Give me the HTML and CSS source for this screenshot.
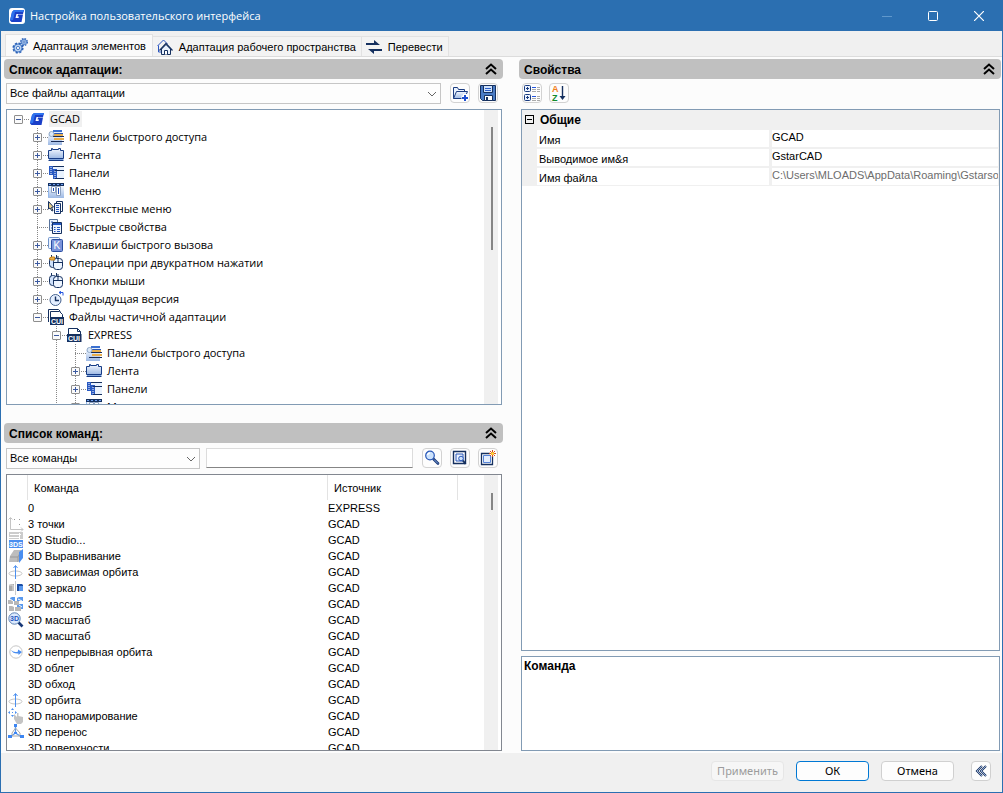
FILE: index.html
```html
<!DOCTYPE html>
<html lang="ru">
<head>
<meta charset="utf-8">
<title>Настройка пользовательского интерфейса</title>
<link rel="stylesheet" href="styles.css">
</head>
<body>
<svg class="defs" width="0" height="0" aria-hidden="true">
  <linearGradient id="blue" x1="0" y1="0" x2="0" y2="1"><stop offset="0" stop-color="#f4f8ff"/><stop offset="1" stop-color="#9db9e4"/></linearGradient>
  <symbol id="g" viewBox="0 0 16 16"><path d="M5 2h10l-1 4H7.500L6.500 10h3l.5-1.500H8.500L9 6.500h5L12.500 14H2.500L1 12.500 3 4z" fill="#1a3fc8"/><path d="M5 2h10l-.5 2H6L4 12l-3 .5L3 4z" fill="#2f73ee"/></symbol>
  <symbol id="up" viewBox="0 0 12 12"><path d="M1 6l5-4.500L11 6M1 11l5-4.500L11 11" fill="none" stroke="#000" stroke-width="2"/></symbol>
  <symbol id="down" viewBox="0 0 10 6"><path d="M1 1l4 4 4-4" fill="none" stroke="#666"/></symbol>
  <symbol id="gears" viewBox="0 0 16 16"><g fill="#b9d3f3" stroke="#2c62b8"><circle cx="6" cy="10" r="4.800" stroke-width="1.600" stroke-dasharray="2.200 1.570"/><circle cx="6" cy="10" r="4" stroke-width=".8"/><circle cx="6" cy="10" r="1.600" fill="#fff" stroke-width=".8"/><circle cx="12" cy="4" r="3.300" stroke-width="1.400" stroke-dasharray="1.600 1"/><circle cx="12" cy="4" r="2.600" stroke-width=".6"/><circle cx="12" cy="4" r="1.100" fill="#fff" stroke-width=".8"/></g></symbol>
  <symbol id="home" viewBox="0 0 16 16"><path d="M.5 7L6.500 1l4 4M1.500 6.500V13H4" fill="none" stroke="#2b55c0"/><path d="M4.500 10v5.500h9V10L9 5.500z" fill="#e8f1fd" stroke="#15305f"/><path d="M2.500 11.500L9 4.500l6.500 7" fill="none" stroke="#15305f" stroke-width="1.200"/><path d="M7.500 15.500v-4h3v4" fill="#fff" stroke="#15305f"/></symbol>
  <symbol id="swap" viewBox="0 0 16 16"><path d="M0 4h8V1l6 5H0zM16 10H2l6 5v-3h8z" fill="#15305f"/></symbol>
  <symbol id="open" viewBox="0 0 16 16"><path d="M1.500 13.500v-11h4l1 2h6v2" fill="#eaf2fe" stroke="#1b3c80"/><path d="M1.500 13.500l3-7h11l-3 7z" fill="url(#blue)" stroke="#1b3c80"/><path d="M13 9v7M9.500 12.500h7" stroke="#fff" stroke-width="4"/><path d="M13 10v6M10 13h6" stroke="#1d4fd0" stroke-width="2"/></symbol>
  <symbol id="save" viewBox="0 0 16 16"><path d="M.5.5h15v15h-13l-2-2z" fill="#4a7cc6" stroke="#15305f"/><path d="M3.500.5h9v7h-9z" fill="#cfe2fb" stroke="#15305f"/><path d="M5 3.500h6M5 5.500h6" stroke="#2c5fca"/><path d="M4.500 10.500h8v5h-8z" fill="#fff" stroke="#15305f"/><path d="M6 12h2v3H6z" fill="#15305f"/></symbol>
  <symbol id="quick" viewBox="0 0 16 16"><path d="M0 5h14v11H0z" fill="url(#blue)"/><path d="M5 1h9v5H5z" fill="#e8f0fc"/><path d="M5 1h9v2H5z" fill="#3b70d0"/><path d="M6 5h9v2H6zM6 9h10v2H6z" fill="#e7ae4c"/><path d="M5 7.500h11M3 12.500h13" stroke="#172a56"/><path d="M5 4.500h10" stroke="#2857b8"/><circle cx="3.500" cy="5" r="2.500" fill="#dbe8f7" stroke="#90a9c8"/></symbol>
  <symbol id="ribbon" viewBox="0 0 16 16"><path d="M.5 11.500v-8h3v-2h1v1h6v-1h2v2h3v8z" fill="url(#blue)" stroke="#173c86"/><path d="M1 12.500h14.500" stroke="#7ea3dc"/><path d="M.5 13.500h15" stroke="#173c86"/></symbol>
  <symbol id="panels" viewBox="0 0 16 16"><path d="M1 1h4v9H1z" fill="#2859c2"/><path d="M3 2v8" stroke="#fff" stroke-dasharray="1 1"/><path d="M5 1.500h11" stroke="#15305f"/><path d="M5 2h11v3H5z" fill="#e9f2fe"/><path d="M7 6h9v7H7z" fill="#e9f2fe"/><path d="M5 4h4v10H5z" fill="#2859c2"/><path d="M7 6v7" stroke="#fff" stroke-dasharray="1 1"/><path d="M7 5.500h9M7 13.500h9" stroke="#15305f"/></symbol>
  <symbol id="menu" viewBox="0 0 16 16"><path d="M0 3h16v12H0z" fill="url(#blue)"/><path d="M0 0h16v3H0z" fill="#15305f"/><path d="M1 1.500h14" stroke="#6fa0f0" stroke-dasharray="2 2"/><path d="M3.500 3.500h4v6h-4zM8.500 3.500h4v9h-4z" fill="#fff" stroke="#8ba0c0"/><path d="M5 5h1v3H5zM10 5h1v6h-1z" fill="#1b48b2"/><path d="M.5 3v11" stroke="#92b8ec"/></symbol>
  <symbol id="context" viewBox="0 0 16 16"><path d="M8.500 2.500v-2h6v10h-2" fill="#fff" stroke="#15305f"/><path d="M6.500 2.500h6v10h-6z" fill="#edf4ff" stroke="#15305f"/><path d="M8 4.500h3M8 6.500h3M8 8.500h3M8 10.500h3" stroke="#2456bf"/><path d="M.5.500l5 5.500-2 .5 1.500 3-1 .5-2-3-1.500 1z" fill="#e9d08e" stroke="#15305f"/></symbol>
  <symbol id="props" viewBox="0 0 16 16"><path d="M1.500.5h8v11h-8z" fill="#edf4ff" stroke="#57739c"/><path d="M3 3h2M3 6h2M3 9h2" stroke="#2456bf"/><path d="M4.500 3.500h9v11h-9z" fill="#edf4ff" stroke="#15305f"/><path d="M5 4h8v2H5z" fill="#2456bf"/><path d="M6 8.500h1.500M9 8.500h3M6 10.500h1.500M9 10.500h3M6 12.500h1.500M9 12.500h3" stroke="#2456bf"/></symbol>
  <symbol id="keys" viewBox="0 0 16 16"><rect x=".5" y=".5" width="11" height="11" rx="1" fill="#eaf2ff" stroke="#6d92ca"/><rect x="3.500" y="2.500" width="11" height="12" rx="1" fill="#7a93da" stroke="#294da0"/><text x="5.500" y="12" class="glyph k">K</text></symbol>
  <symbol id="mouse" viewBox="0 0 16 16"><path d="M3.500 0v3M8.500 0v3" stroke="#15305f"/><rect x="1.500" y="2.500" width="7" height="10" rx="3" fill="#cfe1fb" stroke="#15305f"/><path d="M5.500 6.500q0-3 3-3h3q3 0 3 3v5q0 3-3 3h-3q-3 0-3-3z" fill="#eef5ff" stroke="#15305f"/><path d="M6 7.500h8.500M10 1v6.500" stroke="#15305f"/></symbol>
  <symbol id="dbl" viewBox="0 0 16 16"><use href="#mouse" width="16" height="16"/><path d="M1.500 3l2-1h3v3h-4z" fill="#e7ae4c" stroke="#c88218"/></symbol>
  <symbol id="clock" viewBox="0 0 16 16"><circle cx="7.500" cy="9" r="5.500" fill="#e4efff" stroke="#45618e"/><path d="M7.500 5.500V9.500H11" fill="none" stroke="#15305f" stroke-width="1.400"/><path d="M11 1.500h4v3M13 0l-2 1.500 2 1.500" fill="none" stroke="#2456e0"/></symbol>
  <symbol id="cui" viewBox="0 0 16 16"><path d="M1.500 8V1.500h9l3 3V8" fill="#fff" stroke="#15305f"/><path d="M10.500 1.500v3h3" fill="none" stroke="#15305f"/><path d="M0 7h14.500v8H0z" fill="#15305f"/><text x="1" y="14" class="glyph">CUI</text></symbol>
  <symbol id="cuis" viewBox="0 0 16 16"><path d="M.5 13V.5h10l2 2" fill="#fff" stroke="#15305f"/><path d="M2.500 8V2.500h9l3 3V8" fill="#fff" stroke="#15305f"/><path d="M2 8h14v8H2z" fill="#15305f"/><text x="3" y="15" class="glyph">CUI</text></symbol>
  <symbol id="find" viewBox="0 0 16 16"><path d="M9.500 9l4.500 4.500" stroke="#183878" stroke-width="2.600" stroke-linecap="round"/><path d="M10 9.500l4 4" stroke="#89aae0"/><circle cx="6" cy="5.500" r="4.300" fill="#cce2fc" stroke="#2857b8" stroke-width="1.200"/><path d="M3.500 5q.5-2 2.500-2" fill="none" stroke="#fff" stroke-width="1.500"/></symbol>
  <symbol id="preview" viewBox="0 0 16 16"><path d="M1.500 1.500h12v12h-12z" fill="#fff" stroke="#15305f" stroke-width="1.400"/><path d="M4 4h7v7H4z" fill="#eef5ff" stroke="#2857b8"/><circle cx="9" cy="8.500" r="2.300" fill="#cfe3fd" stroke="#2857b8"/><path d="M11 10.500l2.500 3.500" stroke="#15305f" stroke-width="2"/></symbol>
  <symbol id="new" viewBox="0 0 16 16"><path d="M12.500 6v8.500h-11v-11H10" fill="#fff" stroke="#15305f" stroke-width="1.300"/><path d="M3.500 5.500h7v7h-7z" fill="#e4eefd" stroke="#5784d8"/><path d="M12.500 0v7M9 3.500h7M10 1l5 5M15 1l-5 5" stroke="#d8501c"/><circle cx="12.500" cy="3.500" r="1.600" fill="#ffd83a"/></symbol>
  <symbol id="cat" viewBox="0 0 16 16"><g fill="#edf4ff" stroke="#1b3c80"><rect x=".5" y=".5" width="6" height="6" rx="1"/><rect x=".5" y="9.500" width="6" height="6" rx="1"/></g><path d="M2 3.500h3M3.500 2v3M2 12.500h3M3.500 11v3" stroke="#1b3c80"/><path d="M8 2.500h4M8 11.500h4" stroke="#2456e0"/><path d="M8 4.500h8M8 6.500h8M8 13.500h8M8 15.500h8M13 2.500h3M13 11.500h3" stroke="#aaa" stroke-dasharray="4 1"/></symbol>
  <symbol id="az" viewBox="0 0 16 16"><text x="1" y="7" class="glyph a">A</text><text x="1" y="16" class="glyph z">Z</text><path d="M11.500 1v12" stroke="#15305f" stroke-width="1.400"/><path d="M8.500 11h6l-3 4z" fill="#15305f"/></symbol>
  <symbol id="pts" viewBox="0 0 16 16"><path d="M2.500 2v11.500H15M.5 3.500l2-2 2 2M13 11.500l2 2-2 2" fill="none" stroke="#c4c4c4"/><path d="M6 3h1v1H6zM11 3h1v1h-1zM11 8h1v1h-1z" fill="#999"/></symbol>
  <symbol id="tds" viewBox="0 0 16 16"><path d="M1 0h14v7H1z" fill="#ccc"/><path d="M2 2.500h11M1 5.500h10M11.500 1v6" stroke="#fff"/><path d="M1 8h14v8H1z" fill="#4b8ff0"/><text x="1" y="15" class="glyph">3DS</text></symbol>
  <symbol id="align" viewBox="0 0 16 16"><path d="M2 8l4-6h7v8l-3 4H1z" fill="#bdbdbd"/><path d="M2 9h8l3-6M10 9v5" fill="none" stroke="#999"/><path d="M11 4l4-3v9l-4 5z" fill="#4b8ff0"/></symbol>
  <symbol id="orbit" viewBox="0 0 16 16"><ellipse cx="7.500" cy="9.500" rx="6.500" ry="2.500" fill="none" stroke="#c7c7c7"/><path d="M7.500 15V2M5.500 4l2-2.500L9.500 4" fill="none" stroke="#4b8ff0"/></symbol>
  <symbol id="mirror" viewBox="0 0 16 16"><path d="M1 5l2-1h3v7H1z" fill="#aaa"/><path d="M1 5h4v6" fill="none" stroke="#ddd"/><path d="M7.500 1v14" stroke="#ccc"/><path d="M9 4h5l1 1v6H9z" fill="#1c4fa6"/><path d="M11 6h4v5h-4z" fill="#5999ee"/></symbol>
  <symbol id="array" viewBox="0 0 16 16"><path d="M2 2l2-1h3v4H2zM9 2l2-1h4v4H9zM9 9l2-1h4v5H9z" fill="#5999ee"/><path d="M0 4h5v4H0zM6 5h5v4H6zM1 10h5v5H1zM7 11h6v4H7z" fill="#b7b7b7"/><path d="M2 3l3 2M10 3l4 2M3 9l4 2M11 9l3 2" stroke="#fff"/></symbol>
  <symbol id="zoom3" viewBox="0 0 16 16"><path d="M10.500 10.500l4 4" stroke="#183878" stroke-width="2.600"/><circle cx="6.500" cy="6.500" r="5.700" fill="#dceafd" stroke="#5d82b4"/><text x="2" y="9" class="glyph z3">3D</text></symbol>
  <symbol id="cont" viewBox="0 0 16 16"><circle cx="8" cy="8" r="6.200" fill="#fff" stroke="#c7c7c7"/><path d="M3 6q3 3 7 1.500V5.500L14 8l-3.500 3V9.500Q5 10 3 6z" fill="#4b8ff0"/></symbol>
  <symbol id="pan" viewBox="0 0 16 16"><path d="M4.500 0L6 2H3zM4.500 9L3 7h3zM0 4.500L2 3v3zM9 4.500L7 6V3z" fill="#4b8ff0"/><path d="M4 4h1v1H4z" fill="#4b8ff0"/><path d="M6 6l3 3V5h1.500v3L15 9v5l-2 2H9l-3-5z" fill="#c4c4c4"/></symbol>
  <symbol id="gizmo" viewBox="0 0 16 16"><path d="M7.500 2v7L2 13M7.500 9l6 4" fill="none" stroke="#5d98e8" stroke-width="1.300"/><path d="M4 9l3.500-5L12 9v3H4z" fill="none" stroke="#aaa"/><path d="M6 0h3v3H6zM0 11h4v3H0zM12 11h4v3h-4zM6 8h3v2H6z" fill="#3d86f2"/></symbol>
  <symbol id="left" viewBox="0 0 16 16"><path d="M9 3L4 8l5 5M13 3L8 8l5 5" fill="none" stroke="#15305f" stroke-width="2"/><path d="M9 3L4 8l5 5M13 3L8 8l5 5" fill="none" stroke="#b6cdf0" stroke-width=".8"/></symbol>
</svg>
<div class="window">
  <header class="titlebar">
    <span class="app-icon"><svg><use href="#g"/></svg></span>
    <h1>Настройка пользовательского интерфейса</h1>
    <div class="winbtns">
      <button aria-label="Свернуть" disabled><svg viewBox="0 0 10 10"><path d="M0 5.500h10" stroke="#6098cc"/></svg></button>
      <button aria-label="Развернуть"><svg viewBox="0 0 10 10"><rect x=".5" y=".5" width="9" height="9" rx="1" fill="none" stroke="#fff"/></svg></button>
      <button aria-label="Закрыть"><svg viewBox="0 0 10 10"><path d="M0 0l10 10M10 0L0 10" stroke="#fff" stroke-width="1.200"/></svg></button>
    </div>
  </header>
  <nav class="tabs" role="tablist">
    <button role="tab" class="tab active" aria-selected="true"><svg><use href="#gears"/></svg>Адаптация элементов</button>
    <button role="tab" class="tab"><svg><use href="#home"/></svg>Адаптация рабочего пространства</button>
    <button role="tab" class="tab"><svg><use href="#swap"/></svg>Перевести</button>
  </nav>
  <main class="page">
    <div class="column">
      <section class="pane files">
        <h2>Список адаптации:<button aria-label="Свернуть список адаптации"><svg><use href="#up"/></svg></button></h2>
        <div class="toolbar">
          <div class="combo grow">
            <select aria-label="Файлы адаптации"><option>Все файлы адаптации</option></select>
            <svg><use href="#down"/></svg>
          </div>
          <div class="tools">
            <button aria-label="Открыть"><svg><use href="#open"/></svg></button>
            <button aria-label="Сохранить"><svg><use href="#save"/></svg></button>
          </div>
        </div>
        <div class="box scrollbox">
          <ul class="tree">
            <li><div class="row"><button class="exp" aria-label="Свернуть"></button><svg><use href="#g"/></svg><span class="selected">GCAD</span></div>
              <ul>
                <li><div class="row"><button class="exp plus" aria-label="Развернуть"></button><svg><use href="#quick"/></svg><span>Панели быстрого доступа</span></div></li>
                <li><div class="row"><button class="exp plus" aria-label="Развернуть"></button><svg><use href="#ribbon"/></svg><span>Лента</span></div></li>
                <li><div class="row"><button class="exp plus" aria-label="Развернуть"></button><svg><use href="#panels"/></svg><span>Панели</span></div></li>
                <li><div class="row"><button class="exp plus" aria-label="Развернуть"></button><svg><use href="#menu"/></svg><span>Меню</span></div></li>
                <li><div class="row"><button class="exp plus" aria-label="Развернуть"></button><svg><use href="#context"/></svg><span>Контекстные меню</span></div></li>
                <li><div class="row leaf"><svg><use href="#props"/></svg><span>Быстрые свойства</span></div></li>
                <li><div class="row"><button class="exp plus" aria-label="Развернуть"></button><svg><use href="#keys"/></svg><span>Клавиши быстрого вызова</span></div></li>
                <li><div class="row"><button class="exp plus" aria-label="Развернуть"></button><svg><use href="#dbl"/></svg><span>Операции при двукратном нажатии</span></div></li>
                <li><div class="row"><button class="exp plus" aria-label="Развернуть"></button><svg><use href="#mouse"/></svg><span>Кнопки мыши</span></div></li>
                <li><div class="row"><button class="exp plus" aria-label="Развернуть"></button><svg><use href="#clock"/></svg><span>Предыдущая версия</span></div></li>
                <li class="last"><div class="row"><button class="exp" aria-label="Свернуть"></button><svg><use href="#cuis"/></svg><span>Файлы частичной адаптации</span></div>
                  <ul>
                    <li><div class="row"><button class="exp" aria-label="Свернуть"></button><svg><use href="#cui"/></svg><span>EXPRESS</span></div>
                      <ul>
                        <li><div class="row leaf"><svg><use href="#quick"/></svg><span>Панели быстрого доступа</span></div></li>
                        <li><div class="row"><button class="exp plus" aria-label="Развернуть"></button><svg><use href="#ribbon"/></svg><span>Лента</span></div></li>
                        <li><div class="row"><button class="exp plus" aria-label="Развернуть"></button><svg><use href="#panels"/></svg><span>Панели</span></div></li>
                        <li><div class="row"><button class="exp plus" aria-label="Развернуть"></button><svg><use href="#menu"/></svg><span>Меню</span></div></li>
                      </ul>
                    </li>
                  </ul>
                </li>
              </ul>
            </li>
          </ul>
          <div class="scrollbar"><i class="thumb long"></i></div>
        </div>
      </section>
      <section class="pane commands">
        <h2>Список команд:<button aria-label="Свернуть список команд"><svg><use href="#up"/></svg></button></h2>
        <div class="toolbar">
          <div class="combo filter">
            <select aria-label="Категория команд"><option>Все команды</option></select>
            <svg><use href="#down"/></svg>
          </div>
          <input class="search" type="text" aria-label="Поиск команды">
          <div class="tools">
            <button aria-label="Найти"><svg><use href="#find"/></svg></button>
            <button aria-label="Просмотр"><svg><use href="#preview"/></svg></button>
            <button aria-label="Создать"><svg><use href="#new"/></svg></button>
          </div>
        </div>
        <div class="box scrollbox dark">
          <table class="list">
            <colgroup><col class="c-icon"><col class="c-name"><col class="c-src"><col></colgroup>
            <thead><tr><th></th><th>Команда</th><th>Источник</th><th></th></tr></thead>
            <tbody>
              <tr><td></td><td>0</td><td>EXPRESS</td><td></td></tr>
              <tr><td><svg><use href="#pts"/></svg></td><td>3 точки</td><td>GCAD</td><td></td></tr>
              <tr><td><svg><use href="#tds"/></svg></td><td>3D Studio...</td><td>GCAD</td><td></td></tr>
              <tr><td><svg><use href="#align"/></svg></td><td>3D Выравнивание</td><td>GCAD</td><td></td></tr>
              <tr><td><svg><use href="#orbit"/></svg></td><td>3D зависимая орбита</td><td>GCAD</td><td></td></tr>
              <tr><td><svg><use href="#mirror"/></svg></td><td>3D зеркало</td><td>GCAD</td><td></td></tr>
              <tr><td><svg><use href="#array"/></svg></td><td>3D массив</td><td>GCAD</td><td></td></tr>
              <tr><td><svg><use href="#zoom3"/></svg></td><td>3D масштаб</td><td>GCAD</td><td></td></tr>
              <tr><td></td><td>3D масштаб</td><td>GCAD</td><td></td></tr>
              <tr><td><svg><use href="#cont"/></svg></td><td>3D непрерывная орбита</td><td>GCAD</td><td></td></tr>
              <tr><td></td><td>3D облет</td><td>GCAD</td><td></td></tr>
              <tr><td></td><td>3D обход</td><td>GCAD</td><td></td></tr>
              <tr><td><svg><use href="#orbit"/></svg></td><td>3D орбита</td><td>GCAD</td><td></td></tr>
              <tr><td><svg><use href="#pan"/></svg></td><td>3D панорамирование</td><td>GCAD</td><td></td></tr>
              <tr><td><svg><use href="#gizmo"/></svg></td><td>3D перенос</td><td>GCAD</td><td></td></tr>
              <tr><td></td><td>3D поверхности</td><td>GCAD</td><td></td></tr>
            </tbody>
          </table>
          <div class="scrollbar"><i class="thumb short"></i></div>
        </div>
      </section>
    </div>
    <div class="column">
      <section class="pane props">
        <h2>Свойства<button aria-label="Свернуть свойства"><svg><use href="#up"/></svg></button></h2>
        <div class="toolbar">
          <div class="tools">
            <button aria-label="По категориям"><svg><use href="#cat"/></svg></button>
            <button aria-label="По алфавиту"><svg><use href="#az"/></svg></button>
          </div>
        </div>
        <div class="box">
          <table class="grid">
            <colgroup><col class="c-gutter"><col class="c-label"><col></colgroup>
            <thead><tr><th><button class="fold" aria-label="Свернуть"></button></th><th colspan="2">Общие</th></tr></thead>
            <tbody>
              <tr><td></td><th>Имя</th><td>GCAD</td></tr>
              <tr><td></td><th>Выводимое им&amp;я</th><td>GstarCAD</td></tr>
              <tr><td></td><th>Имя файла</th><td class="muted">C:\Users\MLOADS\AppData\Roaming\Gstarsoft</td></tr>
            </tbody>
          </table>
        </div>
        <div class="box note"><h3>Команда</h3></div>
      </section>
    </div>
  </main>
  <footer class="footer">
    <button disabled>Применить</button>
    <button class="primary">ОК</button>
    <button>Отмена</button>
    <button class="less" aria-label="Свернуть окно"><svg><use href="#left"/></svg></button>
  </footer>
</div>
</body>
</html>
```
FILE: styles.css
```css
* { box-sizing: border-box; }
body { margin: 0; font: 11px/16px "Liberation Sans", Arial, sans-serif; color: #000; }
button, select, input { font: inherit; color: inherit; margin: 0; padding: 0; }
h1, h2, h3, ul { margin: 0; padding: 0; }
svg { display: block; width: 16px; height: 16px; flex: none; }
.defs { position: absolute; width: 0; height: 0; }
.glyph { font: bold 7px "Liberation Sans", Arial, sans-serif; fill: #fff; }
.glyph.k { font-size: 10px; font-weight: normal; }
.glyph.a { font-size: 9px; fill: #f08020; }
.glyph.z { font-size: 9px; fill: #118a2c; }
.glyph.z3 { fill: #2456bf; }

.window { display: flex; flex-direction: column; height: 100vh; background: #f0f0f0; border: solid #2b6fb1; border-width: 0 1px 1px; }

.titlebar { display: flex; align-items: center; flex: none; height: 31px; padding-left: 8px; gap: 5px; background: #2b6fb1; color: #fff; }
.app-icon { border-radius: 3px; background: #fff; }
h1 { flex: 1; font: 11px/16px "Open Sans", "Noto Sans", sans-serif; }
.winbtns { display: flex; }
.winbtns button { display: grid; place-items: center; width: 46px; height: 31px; border: 0; background: none; }
.winbtns svg { width: 10px; height: 10px; }

.tabs { display: flex; align-items: flex-end; flex: none; height: 26px; padding-left: 4px; border-bottom: 1px solid #dcdcdc; }
.tab { display: flex; align-items: center; gap: 6px; height: 20px; padding: 0 5px 0 4px; border: solid #e2e2e2; border-width: 1px 1px 0 0; background: #f3f3f3; white-space: nowrap; }
.tab.active { height: 22px; gap: 5px; padding: 0 6px; border-left-width: 1px; background: #fafafa; }

.page { display: grid; grid-template-columns: minmax(0, 499fr) minmax(0, 482fr); grid-template-rows: minmax(0, 1fr); gap: 16px; flex: 1; min-height: 0; padding: 2px 1px 2px 3px; background: #fcfcfc; }
.column { display: flex; flex-direction: column; gap: 18px; min-height: 0; }
.pane { display: flex; flex-direction: column; min-height: 0; }
.files { flex: 346 0 0; }
.commands { flex: 328 0 0; }
.props { flex: 1; }
h2 { display: flex; align-items: center; justify-content: space-between; flex: none; height: 20px; padding: 2px 6px 0 5px; border-radius: 4px; background: #c0c0c0; font-size: 12px; line-height: 16px; }
h2 button { margin-bottom: 3px; border: 0; background: none; }
h2 svg { width: 12px; height: 12px; }

.toolbar { display: flex; align-items: center; flex: none; height: 30px; padding: 0 5px 2px 2px; gap: 6px; }
.commands .toolbar { height: 31px; padding-bottom: 1px; }
.combo { position: relative; display: flex; }
.combo select { flex: 1; min-width: 0; height: 21px; padding-left: 3px; border: 1px solid #c6c6c6; border-radius: 0; appearance: none; background: #fdfdfd; }
.combo svg { position: absolute; top: 8px; right: 4px; width: 10px; height: 6px; pointer-events: none; }
.grow { flex: 1; min-width: 0; }
.filter { width: 194px; }
.search { flex: 1; min-width: 0; height: 20px; padding: 0 4px; border: 1px solid #dcdcdc; border-bottom-color: #858585; background: #fff; }
.tools { display: flex; gap: 8px; margin-left: 3px; }
.tools button, .less { display: grid; place-items: center; width: 20px; height: 20px; border: 1px solid #d2d2d2; border-radius: 4px; background: #fdfdfd; }
.props .tools { gap: 7px; margin-left: 1px; }

.box { flex: 1; min-height: 0; margin: 0 1px 0 2px; overflow: hidden; border: 1px solid #829bb4; background: #fff; }
.box.dark { border-color: #828790; }
.scrollbox { display: flex; }
.scrollbar { flex: none; width: 17px; border-right: 3px solid #fff; background: #f0f0f0; }
.thumb { display: block; width: 2px; margin-left: 7px; background: #858585; }
.thumb.long { height: 123px; margin-top: 17px; }
.thumb.short { height: 17px; margin-top: 18px; }

.tree { flex: 1; min-width: 0; padding-left: 7px; font: 11px/16px "Open Sans", "Noto Sans", sans-serif; }
.tree ul { margin-left: 19px; }
.tree li { list-style: none; }
.tree ul li { background: repeating-linear-gradient(#888 0 1px, transparent 1px 2px) 4px 0 / 1px 100% no-repeat; }
.tree ul li.last { background-size: 1px 9px; }
.row { display: flex; align-items: center; height: 18px; background: repeating-linear-gradient(90deg, #888 0 1px, transparent 1px 2px) 4px 9px / 12px 1px no-repeat; }
.row svg { margin: 0 4px 0 6px; }
.row.leaf { padding-left: 9px; }
.row span { padding: 0 1px; white-space: nowrap; }
.row .selected { padding: 0 2px 0 1px; background: #f0f0f0; }
.exp { width: 9px; height: 9px; border: 1px solid #8e8e8e; border-radius: 1px; background: linear-gradient(#3c5aa0, #3c5aa0) center / 5px 1px no-repeat, #fafafa; }
.exp.plus { background: linear-gradient(#3c5aa0, #3c5aa0) center / 5px 1px no-repeat, linear-gradient(#3c5aa0, #3c5aa0) center / 1px 5px no-repeat, #fafafa; }

table { border-collapse: separate; border-spacing: 0; table-layout: fixed; }
th, td { padding: 0; text-align: left; white-space: nowrap; overflow: hidden; }
.list { flex: 1; width: 0; height: 0; }
.list th { height: 25px; padding-left: 6px; border-right: 1px solid #e3e3e3; font-weight: normal; }
.list th:last-child { border: 0; }
.list td { height: 16px; }
.list td:first-child { padding-left: 1px; }
.c-icon { width: 21px; }
.c-name { width: 300px; }
.c-src { width: 130px; }

.props .box { flex: 540 0 0; }
.grid { width: 100%; background: #f0f0f0; }
.grid thead th { height: 19px; padding-left: 3px; font-size: 12px; line-height: 16px; }
.grid tbody th { height: 19px; padding: 3px 0 0 2px; border: solid #f0f0f0; border-width: 1px 3px 1px 0; background: #fff; font-weight: normal; line-height: 14px; }
.grid tbody td:last-child { padding: 0 0 3px; border: 1px solid #f0f0f0; border-left: 0; background: #fff; line-height: 14px; }
.c-gutter { width: 15px; }
.c-label { width: 235px; }
.fold { display: block; width: 9px; height: 9px; border: 1px solid #000; background: linear-gradient(#000, #000) center / 5px 1px no-repeat; }
.muted { color: #6d6d6d; }
.props .note { flex: 91 0 0; margin-top: 5px; padding: 1px 2px; }
h3 { font-size: 12px; line-height: 16px; }

.footer { display: flex; align-items: center; justify-content: flex-end; flex: none; height: 39px; gap: 12px; padding: 0 11px 3px; font: 11px/16px "Noto Sans", sans-serif; }
.footer button { width: 73px; height: 20px; border: 1px solid #d0d0d0; border-radius: 4px; background: #fdfdfd; }
.footer .primary { border-color: #0078d4; }
.footer button:disabled { border-color: #e6e6e6; background: #f6f6f6; color: #9c9c9c; }
.footer .less { width: 20px; margin-left: 5px; }
```
